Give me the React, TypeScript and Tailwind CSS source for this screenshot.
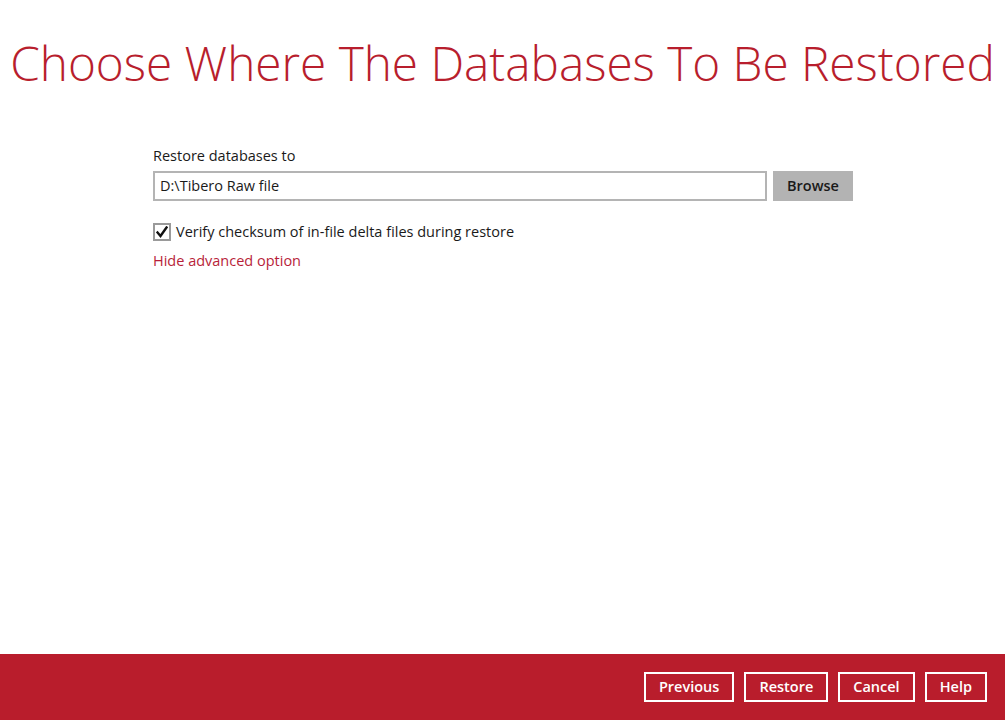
import React, { useState } from 'react';

const FONT = { fontFamily: '"Open Sans", "Liberation Sans", sans-serif' };

const FooterButton = ({ label }: { label: string }) => (
    <button className="h-[30px] px-[13px] border-2 border-white text-white text-[14.5px] font-semibold leading-none bg-transparent">
        {label}
    </button>
);

export default function App() {
    const [verify, setVerify] = useState(true);

    return (
        <div className="w-[1005px] h-[720px] bg-white flex flex-col" style={FONT}>
            <div className="flex-1 flex flex-col">
                {/* Title */}
                <h1 className="text-center text-[#b81e2d] text-[47.7px] font-light leading-none pt-[39px] whitespace-nowrap">
                    Choose Where The Databases To Be Restored
                </h1>

                {/* Form */}
                <div className="ml-[153px] mt-[59px] w-[700px] flex flex-col">
                    <div className="text-[14.5px] text-[#1a1a1a] leading-[20px]">Restore databases to</div>
                    <div className="flex gap-[6px] mt-[5px]">
                        <div className="flex-1 h-[30px] border-2 border-[#b4b4b4] flex items-center px-[5px] text-[14.5px] text-[#1a1a1a]">
                            D:\Tibero Raw file
                        </div>
                        <button className="w-[80px] h-[30px] bg-[#b3b3b3] text-[14.5px] font-semibold text-[#1a1a1a]">
                            Browse
                        </button>
                    </div>

                    <label className="flex items-center gap-[5px] mt-[21px] cursor-pointer" onClick={() => setVerify(!verify)}>
                        <span className="w-[18px] h-[18px] border-2 border-[#9a9a9a] bg-white flex items-center justify-center">
                            {verify && (
                                <svg width="12" height="12" viewBox="0 0 12 12">
                                    <path d="M1.5 6.5 L4.5 10 L10.5 1.5" stroke="#111" strokeWidth="2.4" fill="none" strokeLinecap="square" />
                                </svg>
                            )}
                        </span>
                        <span className="text-[14.5px] text-[#1a1a1a] leading-[20px]">
                            Verify checksum of in-file delta files during restore
                        </span>
                    </label>

                    <div className="mt-[9px] text-[14.5px] text-[#b81e3a] leading-[20px]">Hide advanced option</div>
                </div>
            </div>

            {/* Footer */}
            <div className="h-[66px] bg-[#b91d2c] flex items-center justify-end gap-[10px] pr-[18px]">
                <FooterButton label="Previous" />
                <FooterButton label="Restore" />
                <FooterButton label="Cancel" />
                <FooterButton label="Help" />
            </div>
        </div>
    );
}
